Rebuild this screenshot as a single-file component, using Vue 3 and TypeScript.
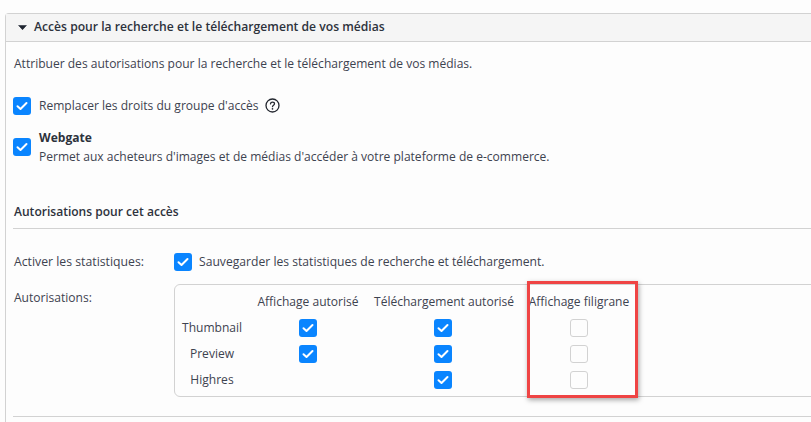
<script setup lang="ts">
const rows = [
  { name: 'Thumbnail', display: true, download: true },
  { name: 'Preview', display: true, download: true },
  { name: 'Highres', display: false, download: true },
]
</script>

<template>
  <div class="page">
    <section class="panel">
      <header class="panel-head">
        <svg class="caret" width="9" height="5" viewBox="0 0 9 5"><path d="M0.6 0.4H8.4L4.5 4.7Z" fill="#1f2530" stroke="#1f2530" stroke-width="0.6" stroke-linejoin="round" /></svg>
        <span>Accès pour la recherche et le téléchargement de vos médias</span>
      </header>
      <div class="panel-body">
        <p class="intro">Attribuer des autorisations pour la recherche et le téléchargement de vos médias.</p>

        <div class="check-row first">
          <span class="box on"><svg width="12" height="10" viewBox="0 0 12 10"><path d="M1.5 5.2L4.5 8L10.5 2" fill="none" stroke="#fff" stroke-width="2" stroke-linecap="round" stroke-linejoin="round" /></svg></span>
          <span>Remplacer les droits du groupe d'accès</span>
          <svg class="help" width="15" height="15" viewBox="0 0 15 15">
            <circle cx="7.5" cy="7.5" r="6.5" fill="none" stroke="#23272f" stroke-width="1.3" />
            <path d="M5.5 5.9C5.6 4.7 6.4 4.1 7.5 4.1C8.7 4.1 9.5 4.8 9.5 5.8C9.5 7.2 7.5 7.2 7.5 8.7" fill="none" stroke="#23272f" stroke-width="1.3" stroke-linecap="round" />
            <circle cx="7.5" cy="10.8" r="0.85" fill="#23272f" />
          </svg>
        </div>

        <div class="check-row second">
          <span class="box on"><svg width="12" height="10" viewBox="0 0 12 10"><path d="M1.5 5.2L4.5 8L10.5 2" fill="none" stroke="#fff" stroke-width="2" stroke-linecap="round" stroke-linejoin="round" /></svg></span>
          <div class="tall">
            <div class="strong">Webgate</div>
            <div>Permet aux acheteurs d'images et de médias d'accéder à votre plateforme de e-commerce.</div>
          </div>
        </div>

        <h3 class="section-title">Autorisations pour cet accès</h3>

        <div class="form-row stats">
          <span class="label">Activer les statistiques:</span>
          <span class="box on"><svg width="12" height="10" viewBox="0 0 12 10"><path d="M1.5 5.2L4.5 8L10.5 2" fill="none" stroke="#fff" stroke-width="2" stroke-linecap="round" stroke-linejoin="round" /></svg></span>
          <span class="stats-text">Sauvegarder les statistiques de recherche et téléchargement.</span>
        </div>

        <div class="form-row perms">
          <span class="label perms-label">Autorisations:</span>
          <div class="grid-box">
            <div class="perm-grid">
              <span></span>
              <span class="th">Affichage autorisé</span>
              <span class="th">Téléchargement autorisé</span>
              <span class="th">Affichage filigrane</span>
              <template v-for="row in rows" :key="row.name">
                <span class="rname">{{ row.name }}</span>
                <span class="cell">
                  <span v-if="row.display" class="box on"><svg width="12" height="10" viewBox="0 0 12 10"><path d="M1.5 5.2L4.5 8L10.5 2" fill="none" stroke="#fff" stroke-width="2" stroke-linecap="round" stroke-linejoin="round" /></svg></span>
                </span>
                <span class="cell">
                  <span v-if="row.download" class="box on"><svg width="12" height="10" viewBox="0 0 12 10"><path d="M1.5 5.2L4.5 8L10.5 2" fill="none" stroke="#fff" stroke-width="2" stroke-linecap="round" stroke-linejoin="round" /></svg></span>
                </span>
                <span class="cell"><span class="box off"></span></span>
              </template>
            </div>
          </div>
        </div>

        <div class="end-rule"></div>
      </div>
    </section>
    <div class="highlight"></div>
  </div>
</template>

<style scoped>
.page {
  position: relative;
  width: 811px;
  height: 422px;
  overflow: hidden;
  background: #fdfdfd;
  padding: 13px 0 0 5px;
  box-sizing: border-box;
  font-family: "Open Sans", "Noto Sans", sans-serif;
  font-size: 12.05px;
  line-height: 18px;
  color: #3d4350;
}
.panel {
  width: 840px;
  height: 430px;
  box-sizing: border-box;
  border: 1px solid #d2d2d2;
  border-bottom: 0;
  border-radius: 4px 0 0 0;
}
.panel-head {
  display: flex;
  align-items: center;
  gap: 7px;
  height: 28px;
  box-sizing: border-box;
  padding: 0 0 1px 12px;
  background: #f5f5f5;
  border-bottom: 1px solid #d2d2d2;
  font-size: 12.15px;
  font-weight: 600;
  color: #2d323c;
}
.caret { margin-top: 1px; }
.panel-body { padding: 0 0 0 8px; }
.intro { margin: 13px 0 0; }
.check-row { display: flex; align-items: center; gap: 8px; margin-left: -1px; }
.check-row.first { margin-top: 24px; }
.check-row.second { margin-top: 13px; }
.help { margin: 0 0 1px -1px; }
.tall { line-height: 19px; }
.strong { font-weight: 700; color: #2d323c; }
.box {
  flex: none;
  width: 18px;
  height: 18px;
  border-radius: 3px;
  box-sizing: border-box;
  display: flex;
  align-items: center;
  justify-content: center;
}
.box.on { background: #0a85ff; }
.box.off { background: #fdfdfd; border: 1px solid #d2d2d2; }
.section-title {
  margin: 37px 0 0 -1px;
  width: 798px;
  padding: 0 0 7px 1px;
  box-sizing: border-box;
  border-bottom: 1px solid #d2d2d2;
  font-size: 12.05px;
  line-height: 18px;
  font-weight: 600;
  color: #2d323c;
}
.form-row { display: flex; }
.label { flex: none; width: 160px; }
.stats { margin-top: 24px; align-items: center; }
.stats .label { font-size: 12.25px; }
.stats-text { margin-left: 7px; font-size: 12.15px; }
.perms { margin-top: 13px; }
.perms-label { margin-top: 5px; }
.grid-box {
  width: 700px;
  height: 113px;
  box-sizing: border-box;
  border: 1px solid #d2d2d2;
  border-radius: 6px;
  padding: 4px 0 0 6px;
}
.perm-grid {
  display: grid;
  grid-template-columns: 61px 102px 138px 104px;
  grid-auto-rows: 26px;
  column-gap: 15px;
  align-items: center;
  text-align: center;
}
.th { white-space: nowrap; }
.rname { padding-left: 1px; }
.cell { display: flex; justify-content: center; }
.end-rule {
  width: 798px;
  margin: 19px 0 0 -1px;
  border-top: 1px solid #d2d2d2;
}
.highlight {
  position: absolute;
  left: 527px;
  top: 281px;
  width: 111px;
  height: 117px;
  box-sizing: border-box;
  border: 3px solid #ef4444;
  box-shadow: 1px 2px 5px rgba(0, 0, 0, 0.35);
}
</style>
